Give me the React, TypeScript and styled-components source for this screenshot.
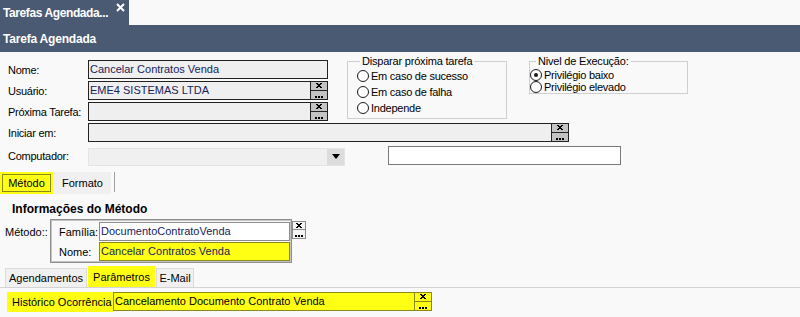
import React from 'react';
import styled, { createGlobalStyle, css } from 'styled-components';

const Colors = {
    Bar: '#4b5a73',
    Panel: '#f9f9f9',
    Field: '#efefef',
    Ink: '#17235c',
    Yellow: '#ffff14',
    Olive: '#8a8a1c',
    TabGray: '#f0f0f0',
};

type Tone = 'gray' | 'yellow' | 'light';

const GlobalStyle = createGlobalStyle`
    body {
        margin: 0;
        background: ${Colors.Panel};
        font-family: "Liberation Sans", Arial, sans-serif;
        font-size: 11px;
        color: #000;
    }
`;

const Window = styled.div`
    width: 800px;
    height: 317px;
    overflow: hidden;
    display: flex;
    flex-direction: column;
`;

const TabStrip = styled.div`
    height: 25px;
    display: flex;
`;

const DocTab = styled.div`
    width: 129px;
    background: ${Colors.Bar};
    color: #fff;
    font-weight: bold;
    font-size: 12px;
    letter-spacing: -0.4px;
    display: flex;
    align-items: center;
    padding-left: 3px;
    box-sizing: border-box;
`;

const CloseIcon = styled.svg`
    margin-left: auto;
    margin-right: 4px;
    align-self: flex-start;
    margin-top: 3px;
`;

const TitleBar = styled.div`
    height: 27px;
    background: ${Colors.Bar};
    color: #fff;
    font-weight: bold;
    font-size: 12px;
    letter-spacing: -0.2px;
    display: flex;
    align-items: center;
    padding-left: 3px;
`;

const TopSection = styled.div`
    display: flex;
    align-items: flex-start;
    padding-top: 3px;
`;

const LeftCol = styled.div`
    width: 328px;
    margin-top: 5px;
    display: flex;
    flex-direction: column;
    gap: 2px;
`;

const Row = styled.div<{ $top?: number }>`
    display: flex;
    align-items: center;
    height: 19px;
    margin-top: ${p => p.$top ?? 0}px;
`;

const Label = styled.div`
    width: 88px;
    flex-shrink: 0;
    padding-left: 8px;
    box-sizing: border-box;
    letter-spacing: -0.25px;
    white-space: nowrap;
`;

const FieldBox = styled.div<{ $width: number; $tone?: Tone }>`
    width: ${p => p.$width}px;
    height: 19px;
    box-sizing: border-box;
    display: flex;
    flex-shrink: 0;
    border: 1px solid #222;
    background: ${Colors.Field};
    color: ${Colors.Ink};
    ${p => p.$tone === 'yellow' && css`
        border-color: ${Colors.Olive};
        background: ${Colors.Yellow};
    `}
    ${p => p.$tone === 'light' && css`
        border-color: #8c8c8c;
        background: #fff;
    `}
`;

const FieldText = styled.div`
    flex: 1;
    padding-left: 1px;
    line-height: 17px;
    white-space: nowrap;
    overflow: hidden;
`;

const LookupButton = styled.div<{ $tone: Tone }>`
    width: 16px;
    display: flex;
    flex-direction: column;
    flex-shrink: 0;
    border-left: 1px solid #222;
    ${p => p.$tone === 'yellow' && css`border-left-color: ${Colors.Olive};`}
    ${p => p.$tone === 'light' && css`
        width: 14px;
        height: 18px;
        box-sizing: border-box;
        border: 1px solid #8c8c8c;
        margin-top: 2px;
    `}
`;

const ButtonHalf = styled.div<{ $tone: Tone; $bottom?: boolean }>`
    flex: 1;
    display: flex;
    justify-content: center;
    align-items: ${p => (p.$bottom ? 'flex-end' : 'center')};
    padding-bottom: ${p => (p.$bottom ? 1 : 0)}px;
    background: ${p => (p.$tone === 'yellow' ? Colors.Yellow : p.$tone === 'light' ? '#f4f4f4' : '#c3c3c3')};
    border-top: ${p => (p.$bottom ? '1px solid' : 'none')};
    border-top-color: ${p => (p.$tone === 'yellow' ? Colors.Olive : p.$tone === 'light' ? '#8c8c8c' : '#222')};
`;

const CrossGlyph = () => (
    <svg width="6" height="5" viewBox="0 0 6 5" shapeRendering="crispEdges">
        <path d="M0 0h2v1H0zM4 0h2v1H4zM1 1h4v1H1zM2 2h2v1H2zM1 3h4v1H1zM0 4h2v1H0zM4 4h2v1H4z" fill="#000" />
    </svg>
);

const DotsGlyph = () => (
    <svg width="8" height="2" viewBox="0 0 8 2" shapeRendering="crispEdges">
        <path d="M0 0h2v2H0zM3 0h2v2H3zM6 0h2v2H6z" fill="#000" />
    </svg>
);

const Lookup = ({ tone }: { tone: Tone }) => (
    <LookupButton $tone={tone}>
        <ButtonHalf $tone={tone}><CrossGlyph /></ButtonHalf>
        <ButtonHalf $tone={tone} $bottom><DotsGlyph /></ButtonHalf>
    </LookupButton>
);

const Group = styled.fieldset<{ $width: number; $left: number; $pad: number; $padTop?: number }>`
    width: ${p => p.$width}px;
    box-sizing: border-box;
    margin: 0 0 0 ${p => p.$left}px;
    padding: ${p => p.$padTop ?? 0}px 0 ${p => p.$pad}px 0;
    border: 1px solid #cfcfcf;
    min-width: 0;
`;

const Legend = styled.legend<{ $left: number }>`
    margin-left: ${p => p.$left}px;
    padding: 0 2px;
    line-height: 13px;
    letter-spacing: -0.2px;
`;

const RadioRow = styled.div<{ $height: number; $indent: number }>`
    height: ${p => p.$height}px;
    display: flex;
    align-items: center;
    gap: 2px;
    padding-left: ${p => p.$indent}px;
    letter-spacing: -0.25px;
    white-space: nowrap;
`;

const RadioDot = styled.span<{ $checked?: boolean }>`
    width: 12px;
    height: 12px;
    box-sizing: border-box;
    border-radius: 50%;
    border: 1px solid #1a1a1a;
    background: #fff;
    display: flex;
    align-items: center;
    justify-content: center;
    &::after {
        content: '';
        display: ${p => (p.$checked ? 'block' : 'none')};
        width: 4px;
        height: 4px;
        border-radius: 50%;
        background: #1a1a1a;
    }
`;

const Combo = styled.div`
    width: 257px;
    height: 18px;
    margin-top: 2px;
    box-sizing: border-box;
    border: 1px solid #e4e4e4;
    background: #f0f0f0;
    display: flex;
    justify-content: flex-end;
`;

const ComboArrow = styled.div`
    width: 17px;
    background: #dcdcdc;
    display: flex;
    align-items: center;
    justify-content: center;
    &::after {
        content: '';
        border-top: 5px solid #000;
        border-left: 4px solid transparent;
        border-right: 4px solid transparent;
    }
`;

const PlainBox = styled.div`
    width: 233px;
    height: 19px;
    margin-left: 43px;
    box-sizing: border-box;
    border: 1px solid #7a7a7a;
    background: #fff;
`;

const TabRow = styled.div`
    display: flex;
    align-items: flex-end;
    height: 23px;
    margin-top: 6px;
`;

const PageTab = styled.div<{ $highlight?: boolean; $width: number }>`
    width: ${p => p.$width}px;
    height: 22px;
    box-sizing: border-box;
    background: ${p => (p.$highlight ? Colors.Yellow : Colors.TabGray)};
    padding: ${p => (p.$highlight ? 2 : 0)}px;
    margin-right: 1px;
    display: flex;
`;

const TabInner = styled.div<{ $framed?: boolean }>`
    flex: 1;
    display: flex;
    align-items: center;
    justify-content: center;
    border: ${p => (p.$framed ? `1px solid ${Colors.Olive}` : 'none')};
`;

const TabEnd = styled.div`
    width: 1px;
    height: 20px;
    margin: 0 0 2px 2px;
    background: #a0a0a0;
`;

const SectionTitle = styled.div`
    font-weight: bold;
    font-size: 12px;
    line-height: 14px;
    padding-left: 12px;
    margin-top: 8px;
`;

const MethodRow = styled.div`
    display: flex;
    align-items: flex-start;
    margin-top: 3px;
`;

const MethodLabel = styled.div`
    width: 50px;
    padding-left: 5px;
    box-sizing: border-box;
    line-height: 13px;
    margin-top: 7px;
`;

const MethodBox = styled.div`
    width: 242px;
    box-sizing: border-box;
    border: 1px solid #8e8e8e;
    box-shadow: inset 0 0 0 1px #c4c4c4;
    padding: 2px 1px 1px 8px;
    display: grid;
    grid-template-columns: 40px 191px;
    row-gap: 1px;
    align-items: center;
`;

const BottomTabs = styled.div`
    display: flex;
    align-items: flex-end;
    height: 21px;
    margin-top: 3px;
    padding-left: 5px;
    border-bottom: 1px solid #d4d4d4;
`;

const SubTab = styled.div<{ $highlight?: boolean; $width: number }>`
    width: ${p => p.$width}px;
    height: ${p => (p.$highlight ? 21 : 19)}px;
    box-sizing: border-box;
    display: flex;
    align-items: center;
    justify-content: center;
    background: ${p => (p.$highlight ? Colors.Yellow : Colors.TabGray)};
    border: 1px solid ${p => (p.$highlight ? Colors.Yellow : '#dcdcdc')};
    border-bottom: none;
    margin-right: 1px;
`;

const ParamRow = styled.div`
    display: flex;
    margin-top: 4px;
    padding-left: 7px;
    height: 20px;
`;

const ParamLabel = styled.div`
    width: 106px;
    background: ${Colors.Yellow};
    padding-left: 5px;
    box-sizing: border-box;
    line-height: 20px;
`;

export default function App() {
    return (
        <Window>
            <GlobalStyle />
            <TabStrip>
                <DocTab>
                    Tarefas Agendada...
                    <CloseIcon width="9" height="9" viewBox="0 0 9 9">
                        <path d="M1 1L8 8M8 1L1 8" stroke="#fff" strokeWidth="2" />
                    </CloseIcon>
                </DocTab>
            </TabStrip>
            <TitleBar>Tarefa Agendada</TitleBar>

            <TopSection>
                <LeftCol>
                    <Row>
                        <Label>Nome:</Label>
                        <FieldBox $width={240}><FieldText>Cancelar Contratos Venda</FieldText></FieldBox>
                    </Row>
                    <Row>
                        <Label>Usuário:</Label>
                        <FieldBox $width={240}><FieldText>EME4 SISTEMAS LTDA</FieldText><Lookup tone="gray" /></FieldBox>
                    </Row>
                    <Row>
                        <Label>Próxima Tarefa:</Label>
                        <FieldBox $width={240}><FieldText /><Lookup tone="gray" /></FieldBox>
                    </Row>
                </LeftCol>
                <Group $width={160} $left={19} $pad={2}>
                    <Legend $left={12}>Disparar próxima tarefa</Legend>
                    <RadioRow $height={16} $indent={9}><RadioDot />Em caso de sucesso</RadioRow>
                    <RadioRow $height={16} $indent={9}><RadioDot />Em caso de falha</RadioRow>
                    <RadioRow $height={16} $indent={9}><RadioDot />Independe</RadioRow>
                </Group>
                <Group $width={159} $left={22} $pad={0} $padTop={1}>
                    <Legend $left={6}>Nivel de Execução:</Legend>
                    <RadioRow $height={12} $indent={0}><RadioDot $checked />Privilégio baixo</RadioRow>
                    <RadioRow $height={12} $indent={0}><RadioDot />Privilégio elevado</RadioRow>
                </Group>
            </TopSection>

            <Row $top={2}>
                <Label>Iniciar em:</Label>
                <FieldBox $width={481}><FieldText /><Lookup tone="gray" /></FieldBox>
            </Row>
            <Row $top={4}>
                <Label>Computador:</Label>
                <Combo><ComboArrow /></Combo>
                <PlainBox />
            </Row>

            <TabRow>
                <PageTab $highlight $width={53}><TabInner $framed>Método</TabInner></PageTab>
                <PageTab $width={57}><TabInner>Formato</TabInner></PageTab>
                <TabEnd />
            </TabRow>

            <SectionTitle>Informações do Método</SectionTitle>
            <MethodRow>
                <MethodLabel>Método::</MethodLabel>
                <MethodBox>
                    <span>Família:</span>
                    <FieldBox $width={191} $tone="light"><FieldText>DocumentoContratoVenda</FieldText></FieldBox>
                    <span>Nome:</span>
                    <FieldBox $width={191} $tone="yellow"><FieldText>Cancelar Contratos Venda</FieldText></FieldBox>
                </MethodBox>
                <Lookup tone="light" />
            </MethodRow>

            <BottomTabs>
                <SubTab $width={82}>Agendamentos</SubTab>
                <SubTab $width={67} $highlight>Parâmetros</SubTab>
                <SubTab $width={38}>E-Mail</SubTab>
            </BottomTabs>
            <ParamRow>
                <ParamLabel>Histórico Ocorrência</ParamLabel>
                <FieldBox $width={319} $tone="yellow" style={{ color: '#000' }}>
                    <FieldText>Cancelamento Documento Contrato Venda</FieldText>
                    <Lookup tone="yellow" />
                </FieldBox>
            </ParamRow>
        </Window>
    );
}
